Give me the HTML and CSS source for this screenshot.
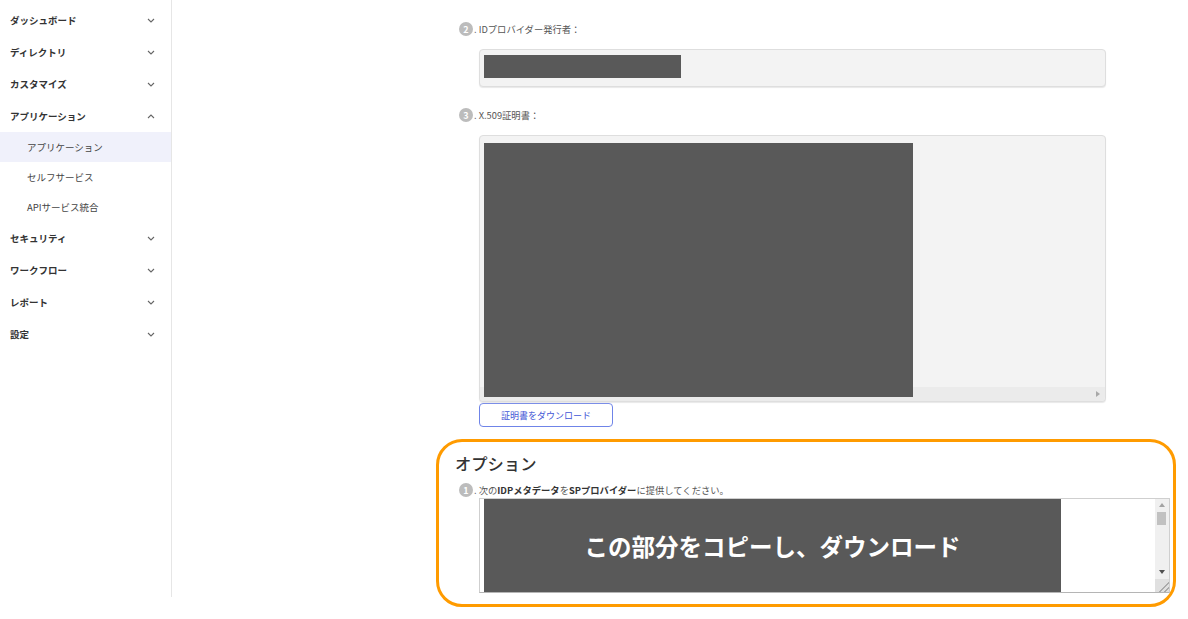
FILE: index.html
```html
<!DOCTYPE html>
<html lang="ja">
<head>
  <meta charset="UTF-8">
  <meta name="viewport" content="width=device-width, initial-scale=1.0">
  <title>アプリケーション</title>
  <link rel="stylesheet" href="styles.css">
</head>
<body>
  <div class="layout">
    <nav class="sidebar">
      <div class="nav-item">ダッシュボード<svg class="chev" viewBox="0 0 8 5"><polyline points="1,1 4,4 7,1"/></svg></div>
      <div class="nav-item">ディレクトリ<svg class="chev" viewBox="0 0 8 5"><polyline points="1,1 4,4 7,1"/></svg></div>
      <div class="nav-item">カスタマイズ<svg class="chev" viewBox="0 0 8 5"><polyline points="1,1 4,4 7,1"/></svg></div>
      <div class="nav-item">アプリケーション<svg class="chev" viewBox="0 0 8 5"><polyline points="1,4 4,1 7,4"/></svg></div>
      <div class="nav-sub active">アプリケーション</div>
      <div class="nav-sub">セルフサービス</div>
      <div class="nav-sub">APIサービス統合</div>
      <div class="nav-item">セキュリティ<svg class="chev" viewBox="0 0 8 5"><polyline points="1,1 4,4 7,1"/></svg></div>
      <div class="nav-item">ワークフロー<svg class="chev" viewBox="0 0 8 5"><polyline points="1,1 4,4 7,1"/></svg></div>
      <div class="nav-item">レポート<svg class="chev" viewBox="0 0 8 5"><polyline points="1,1 4,4 7,1"/></svg></div>
      <div class="nav-item">設定<svg class="chev" viewBox="0 0 8 5"><polyline points="1,1 4,4 7,1"/></svg></div>
    </nav>

    <main class="main">
      <div class="content">
        <div class="step"><span class="num">2</span>. IDプロバイダー発行者：</div>
        <div class="input-box"><div class="redact issuer"></div></div>

        <div class="step step-gap"><span class="num">3</span>. X.509証明書：</div>
        <div class="cert-box">
          <div class="redact cert"></div>
          <div class="hscroll"><span class="arrow-right"></span></div>
        </div>
        <button class="download">証明書をダウンロード</button>

        <section class="options">
          <h2 class="options-title">オプション</h2>
          <div class="step inner-step"><span class="num">1</span>. 次の<b>IDPメタデータ</b>を<b>SPプロバイダー</b>に提供してください。</div>
          <div class="meta-box">
            <div class="redact meta">この部分をコピーし、ダウンロード</div>
            <div class="vscroll">
              <span class="arrow-up"></span>
              <span class="thumb"></span>
              <span class="arrow-down"></span>
              <span class="grip"></span>
            </div>
          </div>
        </section>
      </div>
    </main>
  </div>
</body>
</html>
```

FILE: styles.css
```css
* {
  margin: 0;
  padding: 0;
  box-sizing: border-box;
}

body {
  font-family: "Noto Sans CJK JP", "Noto Sans", sans-serif;
  color: #333;
  background: #fff;
}

.layout {
  display: flex;
  width: 1188px;
  height: 619px;
}

/* sidebar */
.sidebar {
  width: 172px;
  height: 597px;
  border-right: 1px solid #e6e6e6;
  padding-top: 4px;
  flex-shrink: 0;
}

.nav-item {
  display: flex;
  align-items: center;
  justify-content: space-between;
  height: 32px;
  padding: 0 16px 0 10px;
  font-size: 9.5px;
  font-weight: 700;
  color: #333;
}

.chev {
  width: 8px;
  height: 5px;
  fill: none;
  stroke: #666;
  stroke-width: 1.1;
}

.nav-sub {
  display: flex;
  align-items: center;
  height: 30px;
  padding-left: 27px;
  font-size: 9.5px;
  color: #444;
}

.nav-sub.active {
  background: #f0f1fb;
}

/* main */
.main {
  flex: 1;
  padding: 22px 0 0 264px;
}

.content {
  width: 740px;
}

.step {
  display: flex;
  align-items: center;
  height: 14px;
  padding-left: 23px;
  font-size: 9.3px;
  color: #555;
  white-space: pre;
}

.step b {
  color: #333;
}

.num {
  width: 14px;
  height: 14px;
  border-radius: 50%;
  background: #bcbcbc;
  color: #fff;
  font-size: 9px;
  font-weight: 700;
  display: flex;
  align-items: center;
  justify-content: center;
  margin-right: 1px;
}

.step-gap {
  margin-top: 21px;
}

.redact {
  background: #595959;
}

.input-box {
  margin: 13px 0 0 43px;
  width: 627px;
  height: 38px;
  background: #f3f3f3;
  border: 1px solid #dedede;
  border-radius: 4px;
  box-shadow: 0 1px 1px #e8e8e8;
  padding: 5px 4px;
}

.redact.issuer {
  width: 197px;
  height: 23px;
}

.cert-box {
  position: relative;
  margin: 13px 0 0 43px;
  width: 627px;
  height: 267px;
  background: #f3f3f3;
  border: 1px solid #dedede;
  border-radius: 4px;
  box-shadow: 0 1px 1px #e8e8e8;
  padding: 7px 4px;
}

.redact.cert {
  position: relative;
  z-index: 1;
  width: 429px;
  height: 254px;
}

.hscroll {
  position: absolute;
  left: 0;
  right: 0;
  bottom: 0;
  height: 14px;
  background: #ebebeb;
  border-radius: 0 0 4px 4px;
  display: flex;
  align-items: center;
  justify-content: flex-end;
  padding-right: 5px;
}

.arrow-right {
  width: 0;
  height: 0;
  border-top: 3px solid transparent;
  border-bottom: 3px solid transparent;
  border-left: 4px solid #a8a8a8;
}

.download {
  display: block;
  margin: 1px 0 0 43px;
  width: 134px;
  height: 24px;
  border: 1px solid #6f84e8;
  border-radius: 4px;
  background: #fff;
  color: #3f56d6;
  font-family: inherit;
  font-size: 9px;
}

/* options */
.options {
  margin-top: 12px;
  height: 168px;
  border: 3px solid #ff9b00;
  border-radius: 26px;
  padding: 0 3px 0 16px;
}

.options-title {
  margin-top: 9px;
  height: 24px;
  line-height: 24px;
  font-size: 16.3px;
  font-weight: 500;
  color: #333;
}

.inner-step {
  margin-top: 8px;
  padding-left: 4px;
}

.meta-box {
  display: flex;
  margin: 1px 0 0 24px;
  height: 95px;
  border: 1px solid #cfcfcf;
  border-bottom-color: #b5b5b5;
  background: #fff;
}

.redact.meta {
  width: 577px;
  margin-left: 4px;
  display: flex;
  align-items: center;
  justify-content: center;
  color: #fff;
  font-size: 23.5px;
  font-weight: 700;
}

.vscroll {
  position: relative;
  margin-left: auto;
  width: 14px;
  background: #f0f0f0;
}

.arrow-up,
.arrow-down {
  position: absolute;
  left: 4px;
  width: 0;
  height: 0;
  border-left: 3px solid transparent;
  border-right: 3px solid transparent;
}

.arrow-up {
  top: 4px;
  border-bottom: 4px solid #a3a3a3;
}

.arrow-down {
  bottom: 18px;
  border-top: 4px solid #505050;
}

.thumb {
  position: absolute;
  top: 13px;
  left: 2px;
  width: 9px;
  height: 13px;
  background: #c1c1c1;
}

.grip {
  position: absolute;
  bottom: 0;
  left: 0;
  width: 14px;
  height: 13px;
  background: linear-gradient(135deg, #e0e0e0 0, #e0e0e0 62%, #aaa 62%, #aaa 68%, #e0e0e0 68%, #e0e0e0 80%, #aaa 80%, #aaa 86%, #e0e0e0 86%);
}
```
